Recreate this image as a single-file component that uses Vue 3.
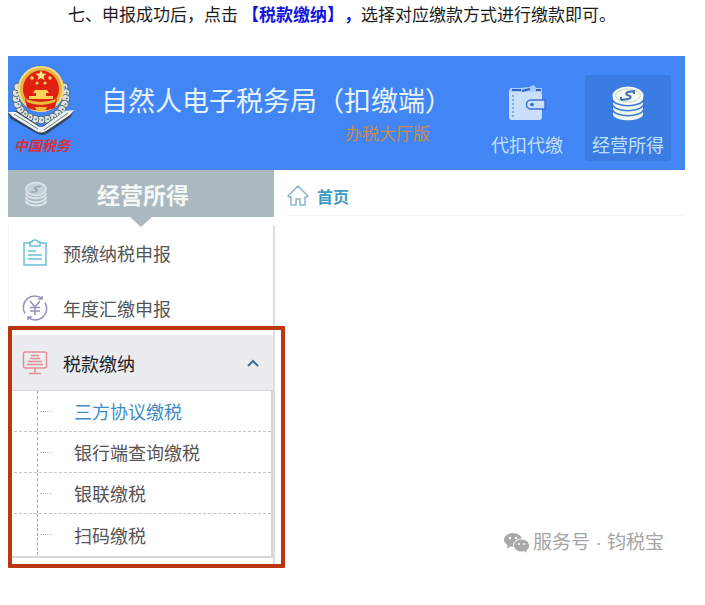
<script setup>
import { ref } from 'vue'

const modules = [
  { name: '代扣代缴', icon: 'wallet', active: false },
  { name: '经营所得', icon: 'coins', active: true },
]
const payments = ['三方协议缴税', '银行端查询缴税', '银联缴税', '扫码缴税']
const current = ref(0)
const open = ref(true)
const beads = Array.from({ length: 17 }, (_, i) => {
  const a = ((-22 + (i * 224) / 16) * Math.PI) / 180
  return { x: 33 + 25 * Math.cos(a), y: 31 + 24 * Math.sin(a) }
})
</script>

<template>
  <article class="article">
    <p class="step">七、申报成功后，点击<strong>【税款缴纳】，</strong>选择对应缴款方式进行缴款即可。</p>

    <section class="app">
      <header class="top">
        <div class="emblem">
          <svg width="66" height="72" viewBox="0 0 66 72" aria-hidden="true">
            <g v-for="(b, i) in beads" :key="i">
              <circle :cx="b.x" :cy="b.y" r="4" fill="#dde3e1" stroke="#51647a" stroke-width="1" />
              <circle :cx="b.x + 1" :cy="b.y" r="1" fill="#68788a" />
            </g>
            <circle cx="33" cy="24" r="23" fill="#e3b544" />
            <circle cx="33" cy="24" r="22" fill="none" stroke="#f3d98c" stroke-width="2" />
            <ellipse cx="33" cy="24" rx="18" ry="18.500" fill="#e2200f" />
            <path d="M17 34h32l-2 9q-14 5-28 0z" fill="#d92411" />
            <path d="M18 34q15 6 30 0l-1 3q-14 6-28 0z" fill="#ecbb3d" />
            <path d="M27 42h12l-2 4h-8z" fill="#ecbb3d" />
            <path d="M33 5l1.500 3.500 4 .2-3 2.500 1 3.800-3.500-2-3.500 2 1-3.800-3-2.500 4-.2z" fill="#ffe98f" />
            <g fill="#ffd45d">
              <circle cx="24" cy="13" r="1.800" /><circle cx="42" cy="13" r="1.800" />
              <circle cx="29" cy="18" r="1.600" /><circle cx="37" cy="18" r="1.600" />
              <path d="M27 25h12l2 3H25zM28 28h10v3H28zM21 31h24v3H21z" />
            </g>
            <path d="M0 48l9-2 24 16 24-16 8 0-2 6-23 16q-6 4-12 0L3 54z" fill="#31465f" />
            <path d="M0 47l8 0 22 14q3 2 6 0l21-15 9-1-4 5-24 16q-5 3-10 0L5 52z" fill="#eef1ee" />
            <path d="M6 49l24 15M60 48L36 65" stroke="#6d7f92" fill="none" />
          </svg>
          <span class="emblem-name">中国税务</span>
        </div>
        <div class="title">
          <h1>自然人电子税务局（扣缴端）</h1>
          <span class="edition">办税大厅版</span>
        </div>
        <nav class="modules">
          <a v-for="m in modules" :key="m.name" href="#" class="module" :class="{ active: m.active }">
            <svg v-if="m.icon === 'wallet'" width="38" height="38" viewBox="0 0 38 38" aria-hidden="true">
              <path d="M2 3h10l9-1 5-2 2 3h6v5H2z" fill="#a8cbfb" />
              <path d="M4 5h9M28 5h5M14 6l8-2" stroke="#3764bd" stroke-width="2" fill="none" />
              <path d="M1 3q0 4 4 4h26q3 0 3 3v22q0 3-3 3H4q-3 0-3-3z" fill="#c9dffc" />
              <path d="M5 10v23" stroke="#6996e5" stroke-width="1.500" stroke-dasharray="2 2" />
              <path d="M23 15h14v9H23a4.500 4.500 0 0 1 0-9z" fill="#c9dffc" stroke="#3c72d1" stroke-width="1.500" />
              <circle cx="24" cy="19.500" r="1.800" fill="#356ac8" />
            </svg>
            <svg v-else width="38" height="38" viewBox="0 0 38 38" aria-hidden="true">
              <path d="M4 10v20c3 7 27 7 30 0V10z" fill="#f0f6ee" />
              <g fill="none" stroke="#3f79d4" stroke-width="1.500">
                <path d="M3 14c3 9 29 9 32 0M3 19c3 9 29 9 32 0M3 24c3 9 29 9 32 0" />
              </g>
              <ellipse cx="19" cy="10.500" rx="15.500" ry="9" fill="#f4f8ee" />
              <ellipse cx="19" cy="10.500" rx="12.500" ry="6.500" fill="none" stroke="#c2d5d8" />
              <path d="M26 6l-7 1q-3 1-1 3l3 1q2 2-2 3l-7 1M25 6v3M12 12v3" fill="none" stroke="#416cab" stroke-width="2" />
            </svg>
            <span>{{ m.name }}</span>
          </a>
        </nav>
      </header>

      <div class="body">
        <aside class="side">
          <h2 class="side-title">
            <svg width="24" height="26" viewBox="0 0 24 26" aria-hidden="true">
              <ellipse cx="12" cy="8" rx="10" ry="6.500" fill="#c4d1d7" stroke="#dce6ea" stroke-width="1.500" />
              <path d="M17 5l-5 1q-3 1 0 2t-1 3l-4 0" fill="none" stroke="#95a6b0" stroke-width="1.500" />
              <path d="M2 12c0 7 20 7 20 0M2 16c0 7 20 7 20 0M2 20c0 6 20 6 20 0" fill="none" stroke="#dce6ea" stroke-width="2" />
            </svg>
            <span>经营所得</span>
          </h2>
          <nav class="menu">
            <a href="#" class="item">
              <svg width="26" height="28" viewBox="0 0 26 28" fill="none" stroke="#6bbdd6" stroke-width="1.500" aria-hidden="true">
                <path d="M8 4H2v22h22V4h-6M8 3h2q0-2 3-2t3 2h2v4H8z" />
                <path d="M6 12h8M6 16h14M6 20h14" />
              </svg>
              预缴纳税申报
            </a>
            <a href="#" class="item">
              <svg width="26" height="26" viewBox="0 0 26 26" fill="none" stroke="#9a91b8" stroke-width="1.500" aria-hidden="true">
                <path d="M20 3.500A11.500 11.500 0 0 0 3 18.500M6 22.500A11.500 11.500 0 0 0 23 7.500M20 1v3h-4M6 25v-3h4" />
                <path d="M8 6l5 6 5-6M13 12v8M8 12.500h10M8 16h10" />
              </svg>
              年度汇缴申报
            </a>
            <div class="group">
              <button type="button" class="item group-head" :aria-expanded="open" @click="open = !open">
                <svg width="26" height="26" viewBox="0 0 26 26" fill="none" stroke="#e48d94" stroke-width="1.500" aria-hidden="true">
                  <rect x="1.500" y="2" width="23" height="16" rx="2" />
                  <path d="M9 5.500h8M8 8.500h10M6 11.500h14M5 14.500h16M13 18v5M7 23.500h12" />
                </svg>
                税款缴纳
                <svg class="chevron" width="14" height="10" viewBox="0 0 14 10" fill="none" stroke="#3f7197" stroke-width="2" aria-hidden="true">
                  <path d="M2 8l5-5 5 5" />
                </svg>
              </button>
              <ul v-if="open" class="tree">
                <li v-for="(p, i) in payments" :key="p">
                  <a href="#" :class="{ current: i === current }" @click.prevent="current = i">{{ p }}</a>
                </li>
              </ul>
            </div>
          </nav>
        </aside>

        <main class="content">
          <div class="crumb">
            <a href="#">
              <svg width="22" height="22" viewBox="0 0 22 22" fill="none" stroke="#8ab4cf" stroke-width="1.500" stroke-linejoin="round" aria-hidden="true">
                <path d="M1 11L11 1l10 10-1 1h-2v8h-5v-6H9v6H4v-8H2z" />
              </svg>
              首页
            </a>
          </div>
          <div class="account">
            <svg width="26" height="22" viewBox="0 0 26 22" aria-hidden="true">
              <path d="M9 1c5 0 9 3 9 7s-4 7-9 7l-3-.5L3 17l.5-4C1.500 12 0 10 0 8c0-4 4-7 9-7z" fill="#a9a9a9" />
              <path d="M17.500 7c4.500 0 8 3 8 6.500 0 2-1 3.500-2.500 4.800l.5 3-3-1.600-3 .3c-4.500 0-8-3-8-6.500S13 7 17.500 7z" fill="#a9a9a9" stroke="#fff" />
              <g fill="#fff"><circle cx="6" cy="6" r="1.200" /><circle cx="12" cy="6" r="1.200" /><circle cx="15" cy="12" r="1" /><circle cx="20" cy="12" r="1" /></g>
            </svg>
            <span>服务号 · 钧税宝</span>
          </div>
        </main>
      </div>
    </section>
  </article>
</template>

<style>
body {
  margin: 0;
  background: #fff;
}
</style>

<style scoped>
.article {
  padding: 0 20px 32px 8px;
  font-family: "Noto Sans CJK SC", sans-serif;
  font-size: 18px;
  color: #555;
}
a {
  color: inherit;
  text-decoration: none;
}
svg {
  flex: none;
}
.step {
  margin: 0;
  padding: 0 0 28px 60px;
  font-size: 17px;
  line-height: 28px;
  color: #1c1c1c;
  white-space: nowrap;
  text-spacing-trim: space-all;
}
.step strong {
  margin-left: 4px;
  color: #1414e0;
}
.top {
  display: flex;
  align-items: flex-start;
  height: 114px;
  background: #4285f4;
}
.emblem {
  width: 66px;
  padding-top: 9px;
}
.emblem svg {
  display: block;
}
.emblem-name {
  display: block;
  padding-left: 6px;
  font-size: 14px;
  font-style: italic;
  font-weight: 700;
  line-height: 16px;
  color: #d2323f;
}
.title {
  display: flex;
  flex-direction: column;
  padding: 24px 0 0 27px;
  white-space: nowrap;
}
h1 {
  margin: 0;
  font-size: 27px;
  font-weight: 400;
  line-height: 40px;
  color: #e4f3ff;
}
.edition {
  padding-left: 244px;
  font-size: 17px;
  line-height: 26px;
  color: #c58c4c;
}
.modules {
  display: flex;
  gap: 15px;
  margin-left: auto;
  padding: 19px 14px 0 0;
}
.module {
  display: flex;
  flex-direction: column;
  align-items: center;
  gap: 8px;
  width: 86px;
  box-sizing: border-box;
  padding: 10px 0 3px;
  border-radius: 4px;
  line-height: 27px;
  color: #c0e0fc;
}
.module.active {
  background: #3b7ce2;
}
.body {
  display: grid;
  grid-template-columns: 267px 1fr;
}
.side {
  display: flex;
  flex-direction: column;
}
.side-title {
  position: relative;
  display: flex;
  align-items: center;
  gap: 49px;
  height: 47px;
  margin: 0 1px 8px 0;
  padding-left: 16px;
  background: #aab8c0;
  font-size: 23px;
  color: #f3f7f5;
}
.side-title::after {
  content: "";
  position: absolute;
  top: 100%;
  left: 50%;
  margin-left: -11px;
  border: 11px solid transparent;
  border-top: 10px solid #aab8c0;
  border-bottom: 0;
}
.menu {
  flex: 1;
  padding-bottom: 10px;
  border-right: 2px solid #dedede;
  border-left: 1px solid #f3f3f3;
}
.item {
  display: flex;
  align-items: center;
  gap: 15px;
  width: 100%;
  height: 55px;
  box-sizing: border-box;
  padding: 0 13px;
}
.group {
  position: relative;
}
.group::after {
  content: "";
  position: absolute;
  inset: -9px -12px -10px -1px;
  border: 4px solid #bd3612;
  border-radius: 1px;
  pointer-events: none;
}
.group-head {
  border: 0;
  background: #eaecef;
  font: inherit;
  color: #222;
  text-align: left;
}
.chevron {
  margin-left: auto;
}
.tree {
  margin: 0;
  padding: 0 0 1px;
  list-style: none;
  border: 1px solid #d6d6d6;
  border-width: 1px 2px 2px 0;
}
.tree li {
  display: flex;
  align-items: center;
  height: 41px;
  box-sizing: border-box;
  border-bottom: 1px dashed #c5c5c5;
}
.tree li:last-child {
  border-bottom: 0;
}
.tree li::before {
  content: "";
  align-self: stretch;
  width: 28px;
  border-right: 1px dashed #a5a5a5;
}
.tree li::after {
  content: "";
  order: 1;
  width: 12px;
  margin: 0 22px 0 2px;
  border-top: 1px dotted #bbb;
}
.tree a {
  order: 2;
}
.tree a.current {
  color: #3c8dc5;
}
.content {
  display: flex;
  flex-direction: column;
}
.crumb {
  display: flex;
  align-items: center;
  height: 46px;
  box-sizing: border-box;
  margin-left: 12px;
  padding-top: 6px;
  border-bottom: 1px solid #f3f3f3;
}
.crumb a {
  display: flex;
  align-items: center;
  gap: 8px;
  font-size: 16px;
  font-weight: 700;
  color: #3d9bc0;
}
.account {
  display: flex;
  align-items: center;
  justify-content: flex-end;
  gap: 3px;
  margin-top: auto;
  padding: 0 21px 11px 0;
  font-family: "Liberation Sans", "Noto Sans CJK SC", sans-serif;
  font-size: 19px;
  line-height: 28px;
  color: #a5a5a5;
}
</style>
